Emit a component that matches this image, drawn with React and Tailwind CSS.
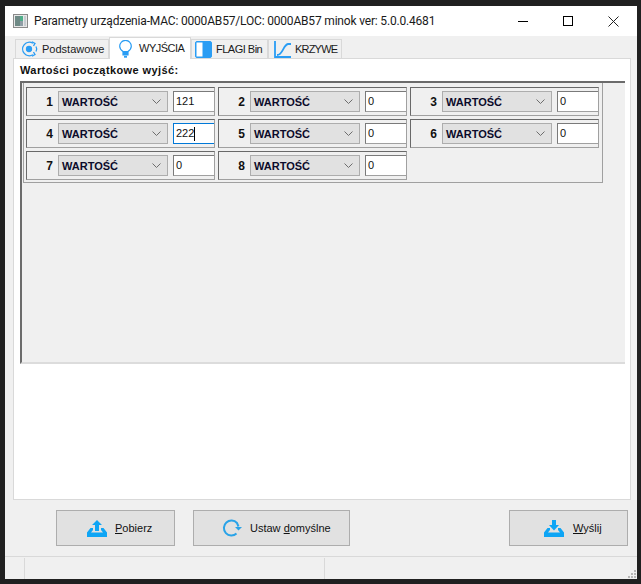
import React from "react";

const FONT = { fontFamily: '"Liberation Sans", sans-serif' };

function BlueBulb() {
  return (
    <svg width="13" height="18" viewBox="0 0 13 18" fill="none" stroke="#2a9df4" strokeWidth="1.200">
      <path d="M4 11.500C2 10 .7 8.200.7 6.200a5.800 5.800 0 0 1 11.600 0c0 2-1.300 3.800-3.300 5.300z" />
      <path d="M4 12h5v3H4z" fill="#2a9df4" />
      <path d="M5 16.800h3" strokeWidth="1.800" />
    </svg>
  );
}

function GearIcon() {
  return (
    <svg width="18" height="16" viewBox="0 0 18 16" fill="none" stroke="#2a9df4" strokeWidth="1.300">
      <path d="M12 2.200A6.800 6.800 0 1 0 12 13.800" />
      <circle cx="8" cy="8" r="2.500" fill="#2a9df4" />
      <path d="M11 .8l3 1.600-1.500 2.600M11 15.200l3-1.600-1.500-2.600M15 5.500a5 5 0 0 1 0 5" />
    </svg>
  );
}

function PanelIcon() {
  return (
    <svg width="17" height="17" viewBox="0 0 17 17">
      <rect x="0.500" y="0.500" width="16" height="16" rx="1.500" fill="#2a9df4" stroke="#2a9df4" />
      <rect x="1.500" y="1.500" width="6" height="14" fill="#fff" />
    </svg>
  );
}

function CurveIcon() {
  return (
    <svg width="17" height="17" viewBox="0 0 17 17" fill="none" stroke="#2a9df4" strokeWidth="1.800">
      <path d="M1 0v16h16" />
      <path d="M3 14c6 0 6-10 11-11h3" />
    </svg>
  );
}

function TrayArrow({ up }) {
  return (
    <svg width="20" height="17" viewBox="0 0 20 17">
      <path d={up ? "M10 0l5 5h-3v6H8V5H5z" : "M8 0h4v5h3l-5 5.500L5 5h3z"} fill="#0ea5f5" />
      <path d="M3.500 8H6v2l-2 2.500h12L14 10V8h2.500L20 12.500V17H0v-4.500z" fill="#0ea5f5" />
    </svg>
  );
}

function RefreshIcon() {
  return (
    <svg width="20" height="20" viewBox="0 0 20 20" fill="none" stroke="#29a3e8" strokeWidth="2">
      <path d="M14.500 15.500A7.500 7.500 0 1 1 15 5L16.500 8.500" />
      <path d="M13 9h7l-3.500 3.500z" fill="#29a3e8" stroke="none" />
    </svg>
  );
}

function Tab({ icon, label, active, className, labelClass }) {
  return (
    <div
      className={`flex items-center border border-b-0 border-[#d9d9d9] ${
        active ? "h-[22px] bg-white relative z-10 -mb-px" : "h-[19px] bg-[#f0f0f0]"
      } ${className}`}
    >
      {icon}
      <span className={`text-[11px] leading-none text-[#1a1a1a] whitespace-nowrap ${labelClass || ""}`}>{label}</span>
    </div>
  );
}

function Cell({ num, value, focused }) {
  return (
    <div className="w-[189px] h-[29px] flex items-center border border-[#a0a0a0] border-t-[#696969] border-l-[#696969] bg-[#f0f0f0]">
      <span className="w-[26px] shrink-0 text-right text-[12px] font-bold text-[#111]">{num}</span>
      <div className="ml-[5px] w-[110px] shrink-0 h-[21px] flex items-center justify-between bg-[#e1e1e1] border border-[#adadad] pl-[3px] pr-[4px]">
        <span className="pt-px text-[11px] font-bold text-[#0b0b2a] leading-none">WARTOŚĆ</span>
        <svg width="9" height="5" viewBox="0 0 9 5" fill="none" stroke="#6d6d6d" strokeWidth="1" className="mr-[2px]">
          <path d="M.5.500l4 4 4-4" />
        </svg>
      </div>
      <div
        className={`ml-[5px] w-[41px] shrink-0 h-[21px] flex items-center bg-white border border-r-0 pl-[2px] ${
          focused ? "border-[#0078d7]" : "border-[#7a7a7a] border-b-[#a0a0a0]"
        }`}
      >
        <span className="text-[11px] leading-none text-[#111]">{value}</span>
        {focused && <span className="w-px h-[14px] bg-black" />}
      </div>
    </div>
  );
}

function Btn({ icon, label, className }) {
  return (
    <div className={`h-[36px] flex items-center bg-[#e1e1e1] border border-[#adadad] ${className}`}>
      {icon}
      <span className="text-[11px] text-[#111] whitespace-nowrap">{label}</span>
    </div>
  );
}

export default function App() {
  return (
    <div className="w-[641px] h-[584px] bg-[#202020] pl-[5px] pr-[4px] pt-[6px] pb-[5px]" style={FONT}>
      <div className="h-full bg-[#f0f0f0] flex flex-col">
        {/* pasek tytułu */}
        <div className="h-[30px] bg-white flex items-center shrink-0">
          <svg width="15" height="14" viewBox="0 0 15 14" className="ml-[8px]">
            <rect x="0.500" y="0.500" width="14" height="13" fill="#e8e8e8" stroke="#8a8a8a" />
            <rect x="2" y="2" width="5" height="10" fill="#6f8a86" />
            <rect x="7" y="2" width="3" height="5" fill="#4fae8a" />
            <rect x="7" y="7" width="3" height="5" fill="#8f9ea6" />
            <rect x="11" y="2" width="2" height="10" fill="#c6ccd0" />
          </svg>
          <span className="ml-[6px] text-[12px] tracking-[-0.18px] text-[#1a1a1a] whitespace-nowrap" style={{ fontFamily: 'Roboto, sans-serif' }}>
            Parametry urządzenia-MAC: 0000AB57/LOC: 0000AB57 minok ver: 5.0.0.4681
          </span>
          <div className="ml-auto flex items-center">
            <span className="w-[10px] h-px bg-black mr-[35px]" />
            <span className="w-[10px] h-[10px] border border-black mr-[35px]" />
            <svg width="11" height="11" viewBox="0 0 11 11" stroke="#222" className="mr-[18px]">
              <path d="M.5.500l10 10M10.500.500l-10 10" />
            </svg>
          </div>
        </div>

        {/* zakładki */}
        <div className="h-[22px] pl-[10px] flex items-end shrink-0">
          <Tab icon={<span className="ml-[5px] mr-[3px] flex"><GearIcon /></span>} label="Podstawowe" className="w-[94px]" />
          <Tab active icon={<span className="ml-[9px] mr-[7px] flex"><BlueBulb /></span>} label="WYJŚCIA" labelClass="tracking-[-0.5px]" className="w-[82px]" />
          <Tab icon={<span className="ml-[3px] mr-[4px] flex"><PanelIcon /></span>} label="FLAGI Bin" labelClass="tracking-[-0.5px]" className="w-[77px]" />
          <Tab icon={<span className="ml-[5px] mr-[4px] flex"><CurveIcon /></span>} label="KRZYWE" labelClass="tracking-[-0.8px]" className="w-[74px]" />
        </div>

        {/* panel */}
        <div className="mx-[8px] mr-[6px] h-[442px] bg-white border border-[#d9d9d9] shrink-0 px-[6px]">
          <div className="h-[22px] pt-px flex items-center text-[11px] font-bold tracking-[0.4px] text-[#111] leading-none">Wartości początkowe wyjść:</div>
          <div className="w-[605px] h-[283px] bg-[#f0f0f0] border-t-2 border-l-2 border-b-2 border-[#6b6b6b] border-b-[#dcdcdc]">
            <div className="w-[580px] h-[100px] ml-px border border-t-0 border-[#a0a0a0] pt-[4px] pl-[2px]">
              <div className="flex gap-[3px]">
                <Cell num="1" value="121" />
                <Cell num="2" value="0" />
                <Cell num="3" value="0" />
              </div>
              <div className="flex gap-[3px] mt-[3px]">
                <Cell num="4" value="222" focused />
                <Cell num="5" value="0" />
                <Cell num="6" value="0" />
              </div>
              <div className="flex gap-[3px] mt-[3px]">
                <Cell num="7" value="0" />
                <Cell num="8" value="0" />
              </div>
            </div>
          </div>
        </div>

        {/* przyciski */}
        <div className="h-[56px] flex items-center pl-[51px] pr-[9px] shrink-0">
          <Btn
            className="w-[119px]"
            icon={<span className="ml-[30px] mr-[8px] flex"><TrayArrow up /></span>}
            label={<><u>P</u>obierz</>}
          />
          <Btn
            className="ml-[18px] w-[157px]"
            icon={<span className="ml-[28px] mr-[8px] flex"><RefreshIcon /></span>}
            label={<>Ustaw <u>d</u>omyślne</>}
          />
          <Btn
            className="ml-auto w-[119px]"
            icon={<span className="ml-[34px] mr-[9px] flex"><TrayArrow /></span>}
            label={<><u>W</u>yślij</>}
          />
        </div>

        {/* pasek stanu */}
        <div className="flex-1 border-t border-[#d9d9d9] flex relative">
          <div className="w-[20px] border-r border-[#d9d9d9] mt-px" />
          <div className="w-[300px] border-r border-[#d9d9d9] mt-px" />
          <svg width="9" height="9" viewBox="0 0 9 9" className="absolute right-0 bottom-0" fill="#b5b5b5">
            <rect x="6" y="0" width="2" height="2" />
            <rect x="3" y="3" width="2" height="2" />
            <rect x="6" y="3" width="2" height="2" />
            <rect x="0" y="6" width="2" height="2" />
            <rect x="3" y="6" width="2" height="2" />
            <rect x="6" y="6" width="2" height="2" />
          </svg>
        </div>
      </div>
    </div>
  );
}
